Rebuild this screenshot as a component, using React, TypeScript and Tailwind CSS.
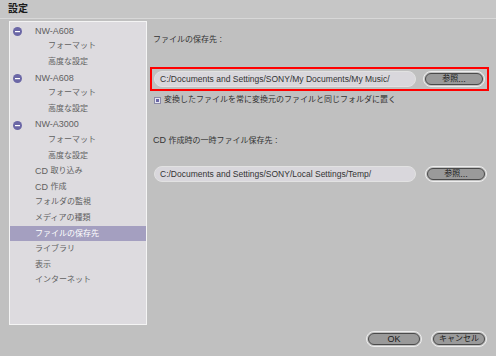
import React from 'react';

type TreeItem = { label: string; level: 0 | 1; toggle?: boolean; selected?: boolean };

const treeItems: TreeItem[] = [
  { label: 'NW-A608', level: 0, toggle: true },
  { label: 'フォーマット', level: 1 },
  { label: '高度な設定', level: 1 },
  { label: 'NW-A608', level: 0, toggle: true },
  { label: 'フォーマット', level: 1 },
  { label: '高度な設定', level: 1 },
  { label: 'NW-A3000', level: 0, toggle: true },
  { label: 'フォーマット', level: 1 },
  { label: '高度な設定', level: 1 },
  { label: 'CD 取り込み', level: 0 },
  { label: 'CD 作成', level: 0 },
  { label: 'フォルダの監視', level: 0 },
  { label: 'メディアの種類', level: 0 },
  { label: 'ファイルの保存先', level: 0, selected: true },
  { label: 'ライブラリ', level: 0 },
  { label: '表示', level: 0 },
  { label: 'インターネット', level: 0 },
];

const font = { fontFamily: '"Liberation Sans", "Noto Sans CJK JP", sans-serif' };

// latin runs a bit larger than the japanese ones, like the old bitmap UI font
function Mixed({ text }: { text: string }) {
  const parts = text.match(/[\x20-\x7e]+|[^\x20-\x7e]+/g) || [];
  return (
    <>
      {parts.map((p, i) =>
        /^[\x20-\x7e]+$/.test(p) ? (
          <span key={i} className="text-[9px] whitespace-pre">{p}</span>
        ) : (
          <span key={i} className="text-[8px]">{p}</span>
        )
      )}
    </>
  );
}

// small round "collapse" marker in front of device nodes
function MinusDot() {
  return (
    <svg width="9" height="9" viewBox="0 0 9 9" className="absolute left-[3px] top-[4px]">
      <circle cx="4.5" cy="4.5" r="4.5" fill="#6b67a6" />
      <rect x="2" y="4" width="5" height="1.2" fill="#ffffff" />
    </svg>
  );
}

function PillButton({ label, w = 'w-[62px]' }: { label: string; w?: string }) {
  return (
    <div className={`${w} h-[16px] rounded-full border border-[#eeeeee] p-[1px]`}>
      <div className="h-full w-full rounded-full border border-[#4a4a4a] bg-[#9a9a9a] flex items-center justify-center text-[#1a1a1a] leading-none">
        <Mixed text={label} />
      </div>
    </div>
  );
}

function PathField({ value }: { value: string }) {
  return (
    <div className="w-[262px] h-[16px] rounded-full bg-[#d9d7dc] border border-[#e2e2e2] flex items-center pl-[5px] text-[8.5px] text-[#333333] whitespace-nowrap overflow-hidden">
      {value}
    </div>
  );
}

export default function App() {
  return (
    <div className="w-[496px] h-[356px] bg-[#c0c0c0] flex flex-col overflow-hidden leading-[12px]" style={font}>
      {/* title */}
      <div className="h-[19px] bg-[#c6c6c6] border-b border-[#d8d8d8] flex items-center pl-[8px]">
        <span className="text-[10px] font-bold text-[#1a1a1a]">設定</span>
      </div>

      <div className="flex flex-1 pt-[2px] pl-[9px]">
        {/* left tree */}
        <div className="w-[138px] h-[304px] bg-[#dddbdf] border border-[#f4f4f4] pt-[1px]">
          {treeItems.map((item, i) => (
            <div
              key={i}
              className={`relative h-[15.6px] flex items-center ${
                item.selected ? 'bg-[#a49fc0] text-white' : 'text-[#616161]'
              } ${item.level === 1 ? 'pl-[38px]' : 'pl-[25px]'}`}
            >
              {item.toggle && <MinusDot />}
              <Mixed text={item.label} />
            </div>
          ))}
        </div>

        {/* right content */}
        <div className="flex-1 flex flex-col pl-[3px] pr-[7px]">
          <div className="pt-[10px] pl-[3px] text-[#333333]">
            <Mixed text="ファイルの保存先 :" />
          </div>

          <div className="mt-[21px] border-2 border-[#ff0000] h-[24px] flex items-center justify-between pl-[2px] pr-[2px]">
            <PathField value="C:/Documents and Settings/SONY/My Documents/My Music/" />
            <PillButton label="参照..." />
          </div>

          <div className="mt-[3px] pl-[4px] flex items-center gap-[3px] text-[8px] text-[#333333]">
            <span className="w-[7px] h-[7px] bg-[#e6e6f0] border border-[#8a8aa8] flex items-center justify-center">
              <span className="w-[3px] h-[3px] bg-[#6b67a6]" />
            </span>
            変換したファイルを常に変換元のファイルと同じフォルダに置く
          </div>

          <div className="mt-[26px] pl-[3px] text-[#333333]">
            <Mixed text="CD 作成時の一時ファイル保存先 :" />
          </div>

          <div className="mt-[19px] h-[16px] flex items-center justify-between pl-[4px] pr-[2px]">
            <PathField value="C:/Documents and Settings/SONY/Local Settings/Temp/" />
            <PillButton label="参照..." />
          </div>

          <div className="mt-auto mb-[9px] flex justify-end gap-[9px] pr-[2px]">
            <PillButton label="OK" w="w-[56px]" />
            <PillButton label="キャンセル" w="w-[56px]" />
          </div>
        </div>
      </div>
    </div>
  );
}
